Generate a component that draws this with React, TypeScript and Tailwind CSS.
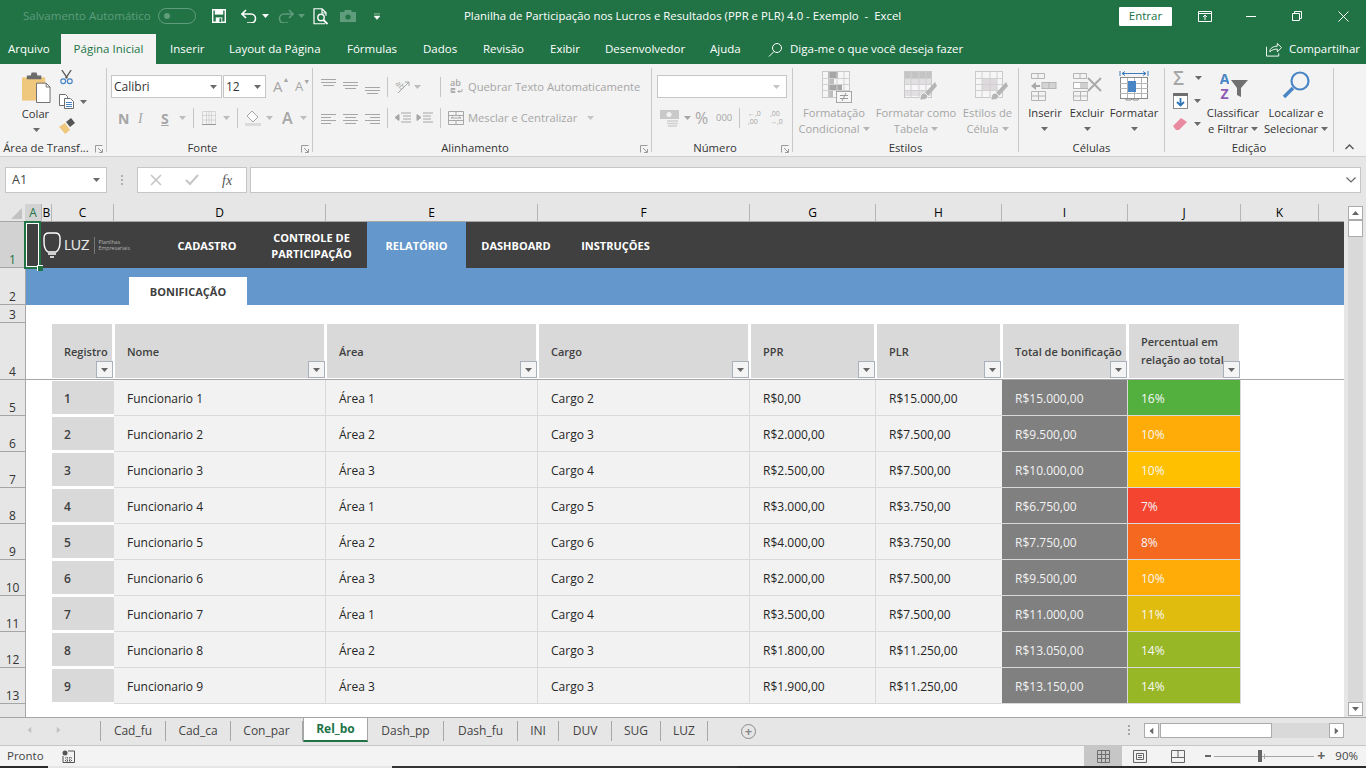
import React from 'react';

const UI = "font-['Open_Sans','Noto_Sans',sans-serif]";

const Caret = ({ className = 'text-[#6a6a6a]' }: { className?: string }) => (
  <svg width="7" height="4" viewBox="0 0 7 4" className={`shrink-0 ${className}`}>
    <path d="M0 0h7L3.5 4z" fill="currentColor" />
  </svg>
);

const Lines = ({ rows, color = '#a6a6a6' }: { rows: number[][]; color?: string }) => (
  <svg width="15" height="15" viewBox="0 0 15 15" className="shrink-0">
    {rows.map((r, i) => (
      <rect key={i} x={r[1]} y={r[0]} width={r[2]} height="1" fill={color} />
    ))}
  </svg>
);

const VSep = ({ className = '' }: { className?: string }) => <div className={`w-px h-[20px] bg-[#c6c6c6] shrink-0 ${className}`} />;

const Launcher = () => (
  <svg width="8" height="8" viewBox="0 0 8 8" className="shrink-0">
    <path d="M0.5 7.5V0.5H7.5M3 3l4 4M7.5 4v3.5H4" fill="none" stroke="#9a9a9a" />
  </svg>
);

const Group = ({ w, label, launcher, children }: { w: string; label: string; launcher?: boolean; children: React.ReactNode }) => (
  <div className={`${w} shrink-0 h-[84px] flex flex-col border-r border-[#c9c9c9]`}>
    <div className="h-[73px] flex">{children}</div>
    <div className={`relative h-[14px] -mb-[3px] flex items-center justify-center text-[11.3px] leading-[14px] text-[#333333] ${launcher ? 'pr-[14px]' : ''}`}>
      <span className="whitespace-nowrap">{label}</span>
      {launcher && <div className="absolute right-[3px] top-[4px]"><Launcher /></div>}
    </div>
  </div>
);

const BigLabel = ({ l1, l2, gray }: { l1: string; l2?: string; gray?: boolean }) => (
  <div className={`flex flex-col items-center text-[11.2px] leading-[16px] whitespace-nowrap ${gray ? 'text-[#a6a6a6]' : 'text-[#333333]'}`}>
    <span>{l1}</span>
    {l2 ? (
      <span className="flex items-center gap-[3px]">{l2}<Caret className={gray ? 'text-[#b5b5b5]' : 'text-[#6a6a6a]'} /></span>
    ) : (
      <span className="h-[16px] flex items-center"><Caret /></span>
    )}
  </div>
);

const TableIcon = ({ kind }: { kind: 'cond' | 'table' | 'cell' }) => (
  <svg width="36" height="32" viewBox="0 0 36 32" className="ml-[5px]">
    <g stroke="#c9c9c9" fill="#f6f6f6">
      <rect x="3.5" y="0.5" width="27" height="26" />
    </g>
    {kind === 'cond' && (
      <g>
        <rect x="9" y="1" width="10" height="6" fill="#a6a6a6" />
        <rect x="9" y="7" width="6" height="6" fill="#bdbdbd" />
        <rect x="9" y="13" width="14" height="6" fill="#a6a6a6" />
        <rect x="9" y="19" width="5" height="7" fill="#bdbdbd" />
      </g>
    )}
    {kind === 'table' && <rect x="4" y="1" width="26" height="6" fill="#c4c4c4" />}
    {kind === 'table' && <rect x="4" y="7" width="26" height="6" fill="#e2dfe2" />}
    {kind === 'table' && <rect x="4" y="19" width="26" height="6" fill="#e2dfe2" />}
    {kind === 'cell' && <rect x="10" y="7" width="15" height="13" fill="#ddd9dd" />}
    <g stroke="#d0d0d0">
      <path d="M3 7.5h28M3 13.5h28M3 19.5h28M10 1v26M18 1v26M25 1v26" />
    </g>
    {kind === 'cond' ? (
      <g>
        <rect x="17.5" y="20.5" width="15" height="11" fill="#f6f6f6" stroke="#a6a6a6" />
        <path d="M21 24.5h8M21 27.5h8M27 22l-4 8" stroke="#9a9a9a" fill="none" />
      </g>
    ) : (
      <g>
        <path d="M34 11L24 22l3 3 9-10z" fill="#b5b5b5" />
        <path d="M24 22c-4 0-5 3-5 7 4 0 8-1 8-4z" fill="#b5b5b5" stroke="#f3f3f3" />
      </g>
    )}
  </svg>
);

const MiniCells = ({ kind }: { kind: 'ins' | 'del' }) => (
  <svg width="30" height="30" viewBox="0 0 30 30" className="shrink-0">
    <g fill="none" stroke="#b5b5b5">
      <path d="M1.5 1.5h13v5h-13zM8 1.5v5" />
      <path d="M1.5 19.5h14v9h-14zM1.5 24h14M8.5 19.5v9" />
    </g>
    {kind === 'ins' ? (
      <g>
        <path d="M1 14l5-4v3h4v2H6v3z" fill="#a9a9a9" />
        <rect x="12" y="10.5" width="14" height="6" fill="#d4d4d4" stroke="#b5b5b5" />
        <path d="M19 10.5v6" stroke="#b5b5b5" />
      </g>
    ) : (
      <g>
        <rect x="1.5" y="10.5" width="14" height="6" fill="#fff" stroke="#b5b5b5" />
        <rect x="8" y="11" width="8" height="5" fill="#cfcfcf" />
        <path d="M16 6l13 13M29 6L16 19" stroke="#a9a9a9" strokeWidth="2" />
      </g>
    )}
  </svg>
);

const Ribbon = () => (
  <div className="h-[93px] shrink-0 bg-[#f3f3f3] border-b border-[#d0d0d0] pt-[4px] flex">
    <Group w="w-[107px]" label="Área de Transf..." launcher>
      <div className="w-[58px] flex flex-col items-center pt-[4px] pl-[14px]">
        <svg width="29" height="32" viewBox="0 0 30 32">
          <path d="M0 5h24v24H0z" fill="#efc77d" />
          <path d="M5 3h4l1-3h5l1 3h4v4H5z" fill="#6b6b6b" />
          <path d="M15 11h10l4 4v16H15z" fill="#fff" stroke="#6e6e6e" />
          <path d="M25 11v4h4" fill="none" stroke="#6e6e6e" />
        </svg>
        <div className="mt-[2px] text-[11.2px] leading-[16px] text-[#333333] -ml-[1px]">Colar</div>
        <div className="h-[16px] flex items-center"><Caret /></div>
      </div>
      <div className="flex flex-col pt-[2px] pl-[1px]">
        <svg width="15" height="15" viewBox="0 0 16 16">
          <path d="M3 0l6 9M13 0L7 9" stroke="#555" strokeWidth="1.4" />
          <circle cx="4.5" cy="12" r="2.6" fill="none" stroke="#4a86c5" strokeWidth="1.3" />
          <circle cx="11.5" cy="12" r="2.6" fill="none" stroke="#4a86c5" strokeWidth="1.3" />
        </svg>
        <div className="mt-[9px] flex items-center gap-[6px]">
          <svg width="15" height="15" viewBox="0 0 15 15">
            <path d="M0.5 0.5h6l2 2v9h-8z" fill="#fff" stroke="#6e6e6e" />
            <path d="M5.5 4.5h6l3 3v7h-9z" fill="#fff" stroke="#6e6e6e" />
            <path d="M7 8.5h6M7 10.5h6M7 12.5h6" stroke="#4a86c5" />
          </svg>
          <Caret />
        </div>
        <svg width="16" height="16" viewBox="0 0 16 16" className="mt-[9px]">
          <path d="M0 9l6-4 5 7-5 4C4 13 2 11 0 9z" fill="#efc77d" />
          <path d="M7 4l5-4 4 5-5 4z" fill="#555" />
        </svg>
      </div>
    </Group>

    <Group w="w-[206px]" label="Fonte" launcher>
      <div className="flex flex-col pt-[7px] pl-[4px]">
        <div className="flex items-center h-[23px]">
          <div className="w-[111px] h-[23px] bg-white border border-[#c6c6c6] flex items-center justify-between pl-[2px] pr-[4px] text-[12px] text-[#333333]">
            Calibri<Caret />
          </div>
          <div className="w-[43px] h-[23px] ml-[1px] bg-white border border-[#c6c6c6] flex items-center justify-between pl-[2px] pr-[4px] text-[12px] text-[#333333]">
            12<Caret />
          </div>
          <span className="ml-[7px] w-[22px] text-[15px] text-[#a6a6a6]">A<span className="text-[7px] align-top">▲</span></span>
          <span className="w-[14px] text-[13px] text-[#a6a6a6]">A<span className="text-[7px] align-top">▼</span></span>
        </div>
        <div className="flex items-center h-[20px] mt-[10px] text-[#a6a6a6]">
          <span className="ml-[7px] w-[20px] text-[14px] font-bold">N</span>
          <span className="w-[23px] text-[14px] italic font-['Liberation_Serif',serif]">I</span>
          <span className="w-[18px] text-[14px] font-bold underline">S</span>
          <Caret className="text-[#bdbdbd]" />
          <VSep className="ml-[7px]" />
          <svg width="14" height="14" viewBox="0 0 14 14" className="ml-[8px]">
            <path d="M0.5 0.5h13v13h-13zM7 0.5v13M0.5 4.5h13M0.5 9h13M4.5 0.5v13M9.5 0.5v13" fill="none" stroke="#bdbdbd" strokeDasharray="1 1" />
            <path d="M0 13.5h14" stroke="#9a9a9a" />
          </svg>
          <Caret className="ml-[7px] text-[#bdbdbd]" />
          <VSep className="ml-[7px]" />
          <svg width="16" height="16" viewBox="0 0 16 16" className="ml-[7px]">
            <path d="M7 1l6 6-5 5-6-6z" fill="#fff" stroke="#a6a6a6" />
            <rect x="0" y="13" width="16" height="3" fill="#dcdcdc" />
          </svg>
          <Caret className="ml-[5px] text-[#bdbdbd]" />
          <span className="ml-[9px] w-[15px] text-[16px] leading-[20px] font-semibold">A</span>
          <Caret className="ml-[3px] text-[#bdbdbd]" />
        </div>
      </div>
    </Group>

    <Group w="w-[339px]" label="Alinhamento" launcher>
      <div className="flex flex-col pt-[7px] pl-[8px]">
        <div className="flex items-center h-[23px]">
          <Lines rows={[[0, 0, 15], [3, 0, 15], [6, 2, 11]]} />
          <div className="w-[7px]" />
          <Lines rows={[[3, 0, 15], [6, 0, 15], [9, 2, 11]]} />
          <div className="w-[7px]" />
          <Lines rows={[[8, 0, 15], [11, 0, 15], [14, 2, 11]]} />
          <VSep className="ml-[7px] mr-[7px]" />
          <svg width="15" height="15" viewBox="0 0 15 15">
            <text x="0" y="9" fontSize="8" fill="#a6a6a6" fontFamily="Open Sans" transform="rotate(45 5 7)">ab</text>
            <path d="M3 14L14 3M14 3v4M14 3h-4" stroke="#a6a6a6" fill="none" />
          </svg>
          <Caret className="ml-[4px] text-[#bdbdbd]" />
          <VSep className="ml-[19px]" />
          <svg width="14" height="15" viewBox="0 0 14 15" className="ml-[9px] mr-[4px] shrink-0">
            <text x="0" y="7" fontSize="9" fontWeight="600" fill="#a6a6a6" fontFamily="Open Sans">ab</text>
            <path d="M1 9.5h4v1H2v2h3v1H1zM12 10v2.5H8M9.5 11L8 12.5 9.5 14" fill="none" stroke="#a6a6a6" strokeWidth="0.9" />
          </svg>
          <span className="pt-[1px] text-[11.2px] text-[#a6a6a6] whitespace-nowrap">Quebrar Texto Automaticamente</span>
        </div>
        <div className="flex items-center h-[20px] mt-[10px]">
          <Lines rows={[[3, 0, 15], [6, 0, 10], [9, 0, 15], [12, 0, 10]]} />
          <div className="w-[7px]" />
          <Lines rows={[[3, 0, 15], [6, 2, 11], [9, 0, 15], [12, 2, 11]]} />
          <div className="w-[7px]" />
          <Lines rows={[[3, 0, 15], [6, 5, 10], [9, 0, 15], [12, 5, 10]]} />
          <VSep className="ml-[7px] mr-[7px]" />
          <svg width="38" height="15" viewBox="0 0 38 15">
            <path d="M6 2h10M8 5h8M8 8h8M6 11h10M0 6.5l4-3v6z" fill="#a6a6a6" stroke="#a6a6a6" />
            <path d="M28 2h10M28 5h8M28 8h8M28 11h10M22 3.5l4 3-4 3z" fill="#a6a6a6" stroke="#a6a6a6" />
          </svg>
          <VSep className="ml-[7px]" />
          <svg width="16" height="14" viewBox="0 0 16 14" className="ml-[7px]">
            <path d="M0.5 0.5h15v13h-15zM0.5 4.5h15M0.5 9.5h15M8 0.5v4M8 9.5v4M3 7h10M3 7l2-1.5M13 7l-2-1.5" fill="none" stroke="#a6a6a6" />
          </svg>
          <span className="ml-[4px] text-[11.2px] text-[#a6a6a6] whitespace-nowrap">Mesclar e Centralizar</span>
          <Caret className="ml-[10px] text-[#c4c4c4]" />
        </div>
      </div>
    </Group>

    <Group w="w-[141px]" label="Número" launcher>
      <div className="flex flex-col pt-[7px] pl-[5px]">
        <div className="w-[130px] h-[23px] bg-white border border-[#c6c6c6] flex items-center justify-end pr-[6px]">
          <Caret className="text-[#c4c4c4]" />
        </div>
        <div className="flex items-center h-[20px] mt-[10px] text-[#a6a6a6]">
          <svg width="20" height="17" viewBox="0 0 20 17" className="ml-[3px]">
            <rect x="0" y="0" width="19" height="9" fill="#c9c9c9" />
            <circle cx="9" cy="4.5" r="2.5" fill="#f3f3f3" />
            <path d="M7 11h11M7 13.5h11M8 16h9" stroke="#cfcfcf" strokeWidth="1.4" />
          </svg>
          <Caret className="ml-[4px]" />
          <span className="ml-[4px] w-[21px] text-[16px] leading-[20px]">%</span>
          <span className="w-[23px] text-[9.5px]">000</span>
          <VSep />
          <span className="ml-[8px] w-[22px] text-[7px] leading-[8px] whitespace-nowrap">←,0<br />,00</span>
          <span className="text-[7px] leading-[8px] whitespace-nowrap">,00<br />→,0</span>
        </div>
      </div>
    </Group>

    <Group w="w-[226px]" label="Estilos">
      <div className="w-[82px] flex flex-col items-center pt-[3px]">
        <TableIcon kind="cond" />
        <div className="mt-[2px]"><BigLabel l1="Formatação" l2="Condicional" gray /></div>
      </div>
      <div className="w-[82px] flex flex-col items-center pt-[3px]">
        <TableIcon kind="table" />
        <div className="mt-[2px]"><BigLabel l1="Formatar como" l2="Tabela" gray /></div>
      </div>
      <div className="w-[61px] flex flex-col items-center pt-[3px]">
        <TableIcon kind="cell" />
        <div className="mt-[2px]"><BigLabel l1="Estilos de" l2="Célula" gray /></div>
      </div>
    </Group>

    <Group w="w-[146px]" label="Células">
      <div className="w-[50px] ml-[1px] flex flex-col items-center pt-[4px]">
        <MiniCells kind="ins" />
        <div className="mt-[3px]"><BigLabel l1="Inserir" /></div>
      </div>
      <div className="w-[34px] flex flex-col items-center pt-[4px]">
        <MiniCells kind="del" />
        <div className="mt-[3px]"><BigLabel l1="Excluir" /></div>
      </div>
      <div className="w-[60px] flex flex-col items-center pt-[2px]">
        <svg width="30" height="32" viewBox="0 0 30 32">
          <path d="M1 1v5M29 1v5M3 3.5h24M3 3.5l3-2M3 3.5l3 2M27 3.5l-3-2M27 3.5l-3 2" fill="none" stroke="#3d7ab8" />
          <rect x="1.5" y="7.5" width="27" height="21" fill="#fff" stroke="#8a8a8a" />
          <path d="M1 13.5h28M1 18.5h28M1 23.5h28M8.5 8v20M15.5 8v20M22.5 8v20" stroke="#b5b5b5" />
          <rect x="9" y="11" width="8" height="11" fill="#4a86c5" />
          <path d="M7 28v2h5l2-2M14 28v2h5l2-2" fill="none" stroke="#8a8a8a" />
        </svg>
        <div className="mt-[3px]"><BigLabel l1="Formatar" /></div>
      </div>
    </Group>

    <Group w="w-[169px]" label="Edição">
      <div className="w-[39px] pl-[8px] flex flex-col pt-[2px]">
        <div className="flex items-center gap-[6px] h-[16px]">
          <span className="w-[16px] text-[19px] leading-[16px] text-[#a6a6a6] font-semibold">Σ</span>
          <Caret />
        </div>
        <div className="flex items-center gap-[6px] h-[16px] mt-[7px]">
          <svg width="15" height="16" viewBox="0 0 15 16">
            <rect x="0.5" y="0.5" width="14" height="15" fill="#fff" stroke="#8a8a8a" />
            <rect x="0" y="0" width="15" height="3" fill="#6e6e6e" />
            <path d="M7.5 5v7M4 9l3.5 3.5L11 9" stroke="#2f75b5" strokeWidth="1.8" fill="none" />
          </svg>
          <Caret />
        </div>
        <div className="flex items-center gap-[6px] h-[16px] mt-[7px]">
          <svg width="15" height="14" viewBox="0 0 15 14">
            <path d="M0 9l8-8 6 4-8 8H3z" fill="#e98aa0" />
          </svg>
          <Caret />
        </div>
      </div>
      <div className="w-[58px] flex flex-col items-center pt-[3px]">
        <div className="h-[31px] w-[30px] flex">
          <div className="w-[13px] flex flex-col items-center text-[14px] leading-[14px] font-bold">
            <span className="h-[14px] mt-[1px] overflow-hidden text-[#4a86c5]">A</span>
            <span className="h-[14px] mt-[1px] overflow-hidden text-[#8e5ab5]">Z</span>
          </div>
          <svg width="17" height="31" viewBox="0 0 17 31" className="shrink-0">
            <path d="M0 9h17l-7 8v9l-4-2v-7z" fill="#707070" />
          </svg>
        </div>
        <div className="mt-[3px]"><BigLabel l1="Classificar" l2="e Filtrar" /></div>
      </div>
      <div className="w-[66px] ml-[1px] flex flex-col items-center pt-[3px]">
        <svg width="28" height="31" viewBox="0 0 28 31">
          <circle cx="18" cy="10" r="8.5" fill="none" stroke="#4a86c5" strokeWidth="2.2" />
          <path d="M11 17L2 26" stroke="#4a86c5" strokeWidth="3.6" />
        </svg>
        <div className="mt-[3px]"><BigLabel l1="Localizar e" l2="Selecionar" /></div>
      </div>
    </Group>

    <div className="flex-1 flex justify-end items-end pr-[12px] pb-[6px]">
      <svg width="9" height="6" viewBox="0 0 9 6"><path d="M0.5 5l4-4 4 4" fill="none" stroke="#555" strokeWidth="1.4" /></svg>
    </div>
  </div>
);

const tabs = [
  { label: 'Inserir', cls: 'w-[59px]' },
  { label: 'Layout da Página', cls: 'w-[118px]' },
  { label: 'Fórmulas', cls: 'w-[76px]' },
  { label: 'Dados', cls: 'w-[60px]' },
  { label: 'Revisão', cls: 'w-[67px]' },
  { label: 'Exibir', cls: 'w-[55px]' },
  { label: 'Desenvolvedor', cls: 'w-[105px]' },
  { label: 'Ajuda', cls: 'w-[58px]' },
];

const TitleBar = () => (
  <div className="h-[32px] shrink-0 bg-[#217346] flex items-center text-white relative">
    <span className="ml-[23px] text-[11.5px] text-[#5f9c7c] w-[135px] whitespace-nowrap">Salvamento Automático</span>
    <div className="w-[38px] h-[16px] rounded-full border border-[#5f9c7c] flex items-center pl-[5px]">
      <div className="w-[6px] h-[6px] rounded-full bg-[#5f9c7c]" />
    </div>
    <svg width="14" height="14" viewBox="0 0 15 15" className="ml-[16px]">
      <path d="M0.75 0.75h13.5v13.5H0.75z" fill="none" stroke="#fff" strokeWidth="1.5" />
      <rect x="3" y="1" width="9" height="5" fill="#fff" />
      <rect x="4" y="9" width="7" height="5" fill="#fff" />
      <rect x="8" y="10" width="2" height="4" fill="#217346" />
    </svg>
    <svg width="16" height="14" viewBox="0 0 16 14" className="ml-[15px]">
      <path d="M1 5h9a4.5 4.5 0 010 9H6M5 1L1 5l4 4" fill="none" stroke="#fff" strokeWidth="1.6" />
    </svg>
    <Caret className="ml-[5px] text-white" />
    <svg width="16" height="14" viewBox="0 0 16 14" className="ml-[9px]">
      <path d="M15 5H6a4.5 4.5 0 000 9h4M11 1l4 4-4 4" fill="none" stroke="#5f9c7c" strokeWidth="1.6" />
    </svg>
    <Caret className="ml-[4px] text-[#5f9c7c]" />
    <svg width="16" height="17" viewBox="0 0 16 17" className="ml-[8px]">
      <path d="M9 0.75H1v15h11M9 0.75l4 4v3M9 1v4h4" fill="none" stroke="#fff" strokeWidth="1.2" />
      <circle cx="8" cy="9.5" r="3.2" fill="#217346" stroke="#fff" strokeWidth="1.4" />
      <path d="M10.5 12l4 4" stroke="#fff" strokeWidth="1.8" />
    </svg>
    <svg width="16" height="12" viewBox="0 0 16 12" className="ml-[11px]">
      <path d="M0 2h4l1-2h6l1 2h4v10H0z" fill="#5f9c7c" />
      <circle cx="8" cy="7" r="2.6" fill="#217346" />
    </svg>
    <svg width="6" height="7" viewBox="0 0 7 7" className="ml-[18px]">
      <path d="M0 0.5h7M0 3h7L3.5 7z" fill="#fff" stroke="#fff" strokeWidth="0.6" />
    </svg>
    <span className="absolute left-[464px] text-[11.4px] whitespace-pre">Planilha de Participação nos Lucros e Resultados (PPR e PLR) 4.0 - Exemplo  -  Excel</span>
    <div className="ml-auto flex items-center">
      <div className="w-[53px] h-[19px] bg-white text-[#217346] text-[11.5px] flex items-center justify-center rounded-[1px]">Entrar</div>
      <svg width="14" height="11" viewBox="0 0 14 11" className="ml-[26px]">
        <path d="M0.5 0.5h13v10H0.5zM0.5 2.5h13M7 9V4.5M5 6l2-2 2 2" fill="none" stroke="#fff" />
      </svg>
      <div className="w-[10px] h-px bg-white ml-[34px]" />
      <svg width="10" height="10" viewBox="0 0 10 10" className="ml-[36px]">
        <path d="M0.5 2.5h7v7h-7zM2.5 2.5v-2h7v7h-2" fill="none" stroke="#fff" />
      </svg>
      <svg width="11" height="11" viewBox="0 0 11 11" className="ml-[36px] mr-[17px]">
        <path d="M0.5 0.5l10 10M10.5 0.5l-10 10" stroke="#fff" />
      </svg>
    </div>
  </div>
);

const TabBar = () => (
  <div className="h-[32px] shrink-0 bg-[#217346] flex items-end text-white text-[11.5px]">
    <div className="w-[61px] h-[30px] pl-[8px] flex items-center">Arquivo</div>
    <div className="w-[95px] h-[30px] bg-[#f3f3f3] text-[#217346] flex items-center justify-center">Página Inicial</div>
    <div className="w-[14px]" />
    {tabs.map(t => (
      <div key={t.label} className={`${t.cls} h-[30px] flex items-center whitespace-nowrap`}>{t.label}</div>
    ))}
    <div className="h-[30px] flex items-center">
      <svg width="15" height="15" viewBox="0 0 15 15">
        <circle cx="9" cy="6" r="4.5" fill="none" stroke="#fff" />
        <path d="M6 9.5L1 14.5M8 10.5h2" stroke="#fff" />
      </svg>
      <span className="ml-[7px]">Diga-me o que você deseja fazer</span>
    </div>
    <div className="ml-auto h-[30px] flex items-center pr-[6px]">
      <svg width="16" height="15" viewBox="0 0 17 15">
        <path d="M0.5 4.5v10h13v-3M4 10c0-4 4-6 8-6V1l4.5 4.5L12 10V7c-3 0-6 1-8 3z" fill="none" stroke="#fff" />
      </svg>
      <span className="ml-[7px]">Compartilhar</span>
    </div>
  </div>
);

const FormulaBar = () => (
  <div className="h-[47px] shrink-0 bg-[#e6e6e6] flex items-start pt-[10px]">
    <div className="ml-[5px] w-[102px] h-[26px] bg-white border border-[#c6c6c6] flex items-center justify-between px-[6px] text-[12.5px] text-[#444444]">
      A1<Caret />
    </div>
    <div className="w-[30px] h-[26px] flex flex-col items-center justify-center gap-[2px]">
      <div className="w-[2px] h-[2px] bg-[#b0b0b0]" />
      <div className="w-[2px] h-[2px] bg-[#b0b0b0]" />
      <div className="w-[2px] h-[2px] bg-[#b0b0b0]" />
    </div>
    <div className="w-[110px] h-[26px] bg-white border border-[#c6c6c6] flex items-center">
      <svg width="12" height="12" viewBox="0 0 12 12" className="ml-[12px]">
        <path d="M1 1l10 10M11 1L1 11" stroke="#c6c6c6" strokeWidth="1.6" />
      </svg>
      <svg width="14" height="12" viewBox="0 0 14 12" className="ml-[23px]">
        <path d="M1 6l4 4 8-9" fill="none" stroke="#c6c6c6" strokeWidth="2" />
      </svg>
      <span className="ml-[23px] font-['Liberation_Serif',serif] italic text-[14px] text-[#555555]">fx</span>
    </div>
    <div className="ml-[3px] w-[1111px] h-[26px] bg-white border border-[#c6c6c6] flex items-center justify-end pr-[4px]">
      <svg width="10" height="6" viewBox="0 0 10 6"><path d="M0.5 0.5L5 5l4.5-4.5" fill="none" stroke="#666" strokeWidth="1.2" /></svg>
    </div>
  </div>
);

const columns = [
  { name: 'A', cls: 'w-[17px] bg-[#d2d2d2] text-[#217346]' },
  { name: 'B', cls: 'w-[10px]' },
  { name: 'C', cls: 'w-[62px]' },
  { name: 'D', cls: 'w-[212px]' },
  { name: 'E', cls: 'w-[212px]' },
  { name: 'F', cls: 'w-[212px]' },
  { name: 'G', cls: 'w-[126px]' },
  { name: 'H', cls: 'w-[126px]' },
  { name: 'I', cls: 'w-[126px]' },
  { name: 'J', cls: 'w-[113px]' },
  { name: 'K', cls: 'w-[78px]' },
];

const ColumnHeader = () => (
  <div className="h-[18px] shrink-0 flex bg-[#e6e6e6] border-b border-[#a6a6a6]">
    <div className="w-[25px] shrink-0 flex items-end justify-end pr-[3px] pb-[2px]">
      <svg width="11" height="11" viewBox="0 0 11 11"><path d="M11 0v11H0z" fill="#c2c2c2" /></svg>
    </div>
    {columns.map(c => (
      <div key={c.name} className={`${c.cls} shrink-0 flex items-center justify-center border-r border-[#b5b5b5] text-[12px] leading-none`}>
        {c.name}
      </div>
    ))}
    <div className="flex-1" />
  </div>
);

const RowHead = ({ n, selected }: { n: number | string; selected?: boolean }) => (
  <div className={`w-[26px] shrink-0 border-r border-b border-[#a6a6a6] flex items-end justify-center text-[12px] leading-[15px] ${selected ? 'bg-[#d2d2d2] text-[#217346]' : 'bg-[#e6e6e6] text-[#333333]'}`}>
    {n}
  </div>
);

const Filter = () => (
  <div className="absolute right-[1px] bottom-0 w-[17px] h-[17px] bg-[#f4f4f4] border border-[#a9b0bb] flex items-center justify-center">
    <Caret className="text-[#666666]" />
  </div>
);

const headers = [
  { label: 'Registro', cls: 'mr-[2px] pl-[12px] pt-[2px]' },
  { label: 'Nome', cls: 'ml-[1px] mr-[2px] pl-[12px] pt-[2px]' },
  { label: 'Área', cls: 'ml-[1px] mr-[2px] pl-[12px] pt-[2px]' },
  { label: 'Cargo', cls: 'ml-[1px] mr-[2px] pl-[12px] pt-[2px]' },
  { label: 'PPR', cls: 'ml-[1px] mr-[2px] pl-[12px] pt-[2px]' },
  { label: 'PLR', cls: 'ml-[1px] mr-[2px] pl-[12px] pt-[2px]' },
  { label: 'Total de bonificação', cls: 'ml-[1px] mr-[2px] pl-[12px] pt-[2px] whitespace-nowrap' },
  { label: 'Percentual em relação ao total', cls: 'ml-[1px] mr-[2px] pl-[12px] pr-[6px]' },
];

const rows = [
  ['1', 'Funcionario 1', 'Área 1', 'Cargo 2', 'R$0,00', 'R$15.000,00', 'R$15.000,00', '16%', 'bg-[#54b03e]'],
  ['2', 'Funcionario 2', 'Área 2', 'Cargo 3', 'R$2.000,00', 'R$7.500,00', 'R$9.500,00', '10%', 'bg-[#ffac08]'],
  ['3', 'Funcionario 3', 'Área 3', 'Cargo 4', 'R$2.500,00', 'R$7.500,00', 'R$10.000,00', '10%', 'bg-[#ffc000]'],
  ['4', 'Funcionario 4', 'Área 1', 'Cargo 5', 'R$3.000,00', 'R$3.750,00', 'R$6.750,00', '7%', 'bg-[#f44530]'],
  ['5', 'Funcionario 5', 'Área 2', 'Cargo 6', 'R$4.000,00', 'R$3.750,00', 'R$7.750,00', '8%', 'bg-[#f4681f]'],
  ['6', 'Funcionario 6', 'Área 3', 'Cargo 2', 'R$2.000,00', 'R$7.500,00', 'R$9.500,00', '10%', 'bg-[#ffac08]'],
  ['7', 'Funcionario 7', 'Área 1', 'Cargo 4', 'R$3.500,00', 'R$7.500,00', 'R$11.000,00', '11%', 'bg-[#dfbc0d]'],
  ['8', 'Funcionario 8', 'Área 2', 'Cargo 3', 'R$1.800,00', 'R$11.250,00', 'R$13.050,00', '14%', 'bg-[#98b726]'],
  ['9', 'Funcionario 9', 'Área 3', 'Cargo 3', 'R$1.900,00', 'R$11.250,00', 'R$13.150,00', '14%', 'bg-[#98b726]'],
];

const GRID = 'grid grid-cols-[26px_62px_212px_212px_212px_126px_126px_126px_113px_1fr] flex-1';

const Sheet = () => (
  <div className="relative flex flex-col h-[495px] font-['Open_Sans','Noto_Sans',sans-serif]">
    <div className="flex h-[46px]">
      <RowHead n={1} selected />
      <div className="flex-1 bg-[#404040] flex items-stretch text-white font-bold text-[11px] leading-[16px]">
        <div className="w-[132px] pl-[17px] flex items-center">
          <svg width="18" height="27" viewBox="0 0 18 27">
            <path d="M5 20C2 18 1 15 1 10V6c0-3 2-5 5-5h6c3 0 5 2 5 5v4c0 5-1 8-4 10z" fill="none" stroke="#fff" strokeWidth="1.4" />
            <path d="M5 22h8M7 25h4" stroke="#fff" strokeWidth="1.4" />
          </svg>
          <span className="ml-[3px] text-[14px] font-normal font-['Lato',sans-serif] text-[#e6e6e6]">LUZ</span>
          <div className="w-px h-[17px] bg-[#777777] ml-[4px]" />
          <div className="ml-[4px] text-[5.2px] leading-[6.5px] font-normal text-[#b5b5b5]">Planilhas<br />Empresariais</div>
        </div>
        <div className="w-[98px] pt-[2px] flex items-center justify-center">CADASTRO</div>
        <div className="w-[111px] pt-[2px] flex items-center justify-center text-center">CONTROLE DE<br />PARTICIPAÇÃO</div>
        <div className="w-[99px] pt-[2px] bg-[#6497cb] flex items-center justify-center">RELATÓRIO</div>
        <div className="w-[100px] pt-[2px] flex items-center justify-center">DASHBOARD</div>
        <div className="w-[99px] pt-[2px] flex items-center justify-center">INSTRUÇÕES</div>
      </div>
    </div>

    <div className="flex h-[37px]">
      <RowHead n={2} />
      <div className="flex-1 bg-[#6497cb] flex items-end pl-[103px]">
        <div className="w-[118px] h-[28px] pt-[2px] bg-white flex items-center justify-center text-[11px] font-bold text-[#404040]">BONIFICAÇÃO</div>
      </div>
    </div>

    <div className="flex h-[18px]">
      <RowHead n={3} />
      <div className="flex-1 bg-white" />
    </div>

    <div className="flex h-[57px]">
      <RowHead n={4} />
      <div className={`${GRID} bg-white border-b border-[#a6a6a6]`}>
        <div />
        {headers.map(h => (
          <div key={h.label} className="relative h-[55px] pt-px">
            <div className={`h-[54px] bg-[#d9d9d9] flex items-center text-[11px] leading-[18px] font-semibold text-[#404040] overflow-hidden ${h.cls}`}>
              <span>{h.label}</span>
            </div>
            <Filter />
          </div>
        ))}
        <div />
      </div>
    </div>

    {rows.map((r, i) => (
      <div key={r[0]} className="flex h-[36px]">
        <RowHead n={i + 5} />
        <div className={`${GRID} bg-white text-[12px] text-[#262626]`}>
          <div />
          <div className="h-[36px] pt-[1px] pb-[2px]">
            <div className="h-full bg-[#d9d9d9] flex items-center pl-[12px] pt-[2px] font-semibold text-[#404040]">{r[0]}</div>
          </div>
          {[r[1], r[2], r[3], r[4]].map((v, j) => (
            <div key={j} className="bg-[#f2f2f2] border-r border-b border-[#d9d9d9] flex items-center pl-[13px] pt-[2px]">{v}</div>
          ))}
          <div className="bg-[#f2f2f2] border-b border-[#d9d9d9] flex items-center pl-[13px] pt-[2px]">{r[5]}</div>
          <div className="bg-[#808080] border-r border-b border-[#d9d9d9] flex items-center pl-[13px] pt-[2px] text-[#f2f2f2]">{r[6]}</div>
          <div className={`${r[8]} border-r border-b border-[#d9d9d9] flex items-center pl-[13px] pt-[2px] text-[#f7f7f7]`}>{r[7]}</div>
          <div />
        </div>
      </div>
    ))}

    <div className="flex h-[13px]">
      <div className="w-[26px] shrink-0 bg-[#e6e6e6] border-r border-[#a6a6a6]" />
      <div className="flex-1 bg-white" />
    </div>

    <div className="absolute left-[24px] -top-px w-[17px] h-[48px] border-2 border-[#217346]">
      <div className="w-full h-full border border-white" />
    </div>
    <div className="absolute left-[37px] top-[43px] w-[6px] h-[6px] bg-[#217346] border-l border-t border-white" />
  </div>
);

const VScroll = () => (
  <div className="w-[22px] shrink-0 bg-[#e6e6e6] flex flex-col items-center pt-[2px] pb-px">
    <div className="w-[15px] h-[14px] bg-white border border-[#ababab] flex items-center justify-center">
      <Caret className="rotate-180 text-[#666666]" />
    </div>
    <div className="w-[15px] flex-1 bg-[#d9d9d9] flex flex-col">
      <div className="h-[17px] bg-white border border-[#ababab]" />
    </div>
    <div className="w-[15px] h-[14px] bg-white border border-[#ababab] flex items-center justify-center">
      <Caret className="text-[#666666]" />
    </div>
  </div>
);

const sheets = [
  { name: 'Cad_fu', cls: 'w-[65px]' },
  { name: 'Cad_ca', cls: 'w-[65px]' },
  { name: 'Con_par', cls: 'w-[72px]' },
  { name: 'Rel_bo', cls: 'w-[65px]', active: true },
  { name: 'Dash_pp', cls: 'w-[76px]' },
  { name: 'Dash_fu', cls: 'w-[74px]' },
  { name: 'INI', cls: 'w-[41px]' },
  { name: 'DUV', cls: 'w-[53px]' },
  { name: 'SUG', cls: 'w-[49px]' },
  { name: 'LUZ', cls: 'w-[47px]' },
];

const SheetTabs = () => (
  <div className="h-[28px] shrink-0 bg-[#e6e6e6] border-t border-[#a6a6a6] flex items-start text-[12px] text-[#444444]">
    <div className="w-[100px] h-[24px] flex items-center pl-[26px]">
      <Caret className="rotate-90 text-[#c2c2c2]" />
      <div className="w-[22px]" />
      <Caret className="-rotate-90 text-[#c2c2c2]" />
    </div>
    <div className="flex items-start h-[20px] border-l border-[#a6a6a6] mt-[3px]">
      {sheets.map(s =>
        s.active ? (
          <div key={s.name} className={`${s.cls} h-[24px] -mt-[3px] bg-white border-b-2 border-[#217346] border-x border-x-[#a6a6a6] flex items-center justify-center font-bold text-[#217346]`}>{s.name}</div>
        ) : (
          <div key={s.name} className={`${s.cls} h-[20px] border-r border-[#a6a6a6] flex items-center justify-center`}>{s.name}</div>
        ),
      )}
    </div>
    <div className="ml-[33px] mt-[6px] w-[15px] h-[15px] rounded-full border border-[#8a8a8a] flex items-center justify-center text-[#8a8a8a] text-[13px] leading-none font-bold">+</div>
    <div className="ml-auto flex items-start mt-[5px] mr-[22px]">
      <div className="flex flex-col gap-[2px] mr-[14px] mt-[2px]">
        <div className="w-[2px] h-[2px] bg-[#a6a6a6]" />
        <div className="w-[2px] h-[2px] bg-[#a6a6a6]" />
        <div className="w-[2px] h-[2px] bg-[#a6a6a6]" />
      </div>
      <div className="w-[15px] h-[15px] bg-white border border-[#ababab] flex items-center justify-center">
        <Caret className="rotate-90 text-[#666666]" />
      </div>
      <div className="w-[170px] h-[15px] bg-[#d9d9d9] flex pl-px">
        <div className="w-[112px] h-full bg-white border border-[#ababab]" />
      </div>
      <div className="w-[15px] h-[15px] bg-white border border-[#ababab] flex items-center justify-center">
        <Caret className="-rotate-90 text-[#666666]" />
      </div>
    </div>
  </div>
);

const StatusBar = () => (
  <div className="h-[21px] shrink-0 bg-[#f3f3f3] border-t border-[#c6c6c6] flex items-center text-[11.5px] text-[#444444]">
    <span className="ml-[7px] w-[55px]">Pronto</span>
    <svg width="13" height="13" viewBox="0 0 13 13">
      <circle cx="3" cy="3" r="2.5" fill="#555" />
      <path d="M6 1h6.5v11.5H1V6" fill="none" stroke="#555" />
      <path d="M3 8h8M3 10.5h8M5 7v5M8 7v5" stroke="#555" strokeDasharray="1 1" />
    </svg>
    <div className="ml-auto flex items-center h-full">
      <div className="w-[38px] h-[20px] bg-[#c6c6c6] flex items-center justify-center">
        <svg width="13" height="13" viewBox="0 0 13 13">
          <path d="M0.5 0.5h12v12H0.5zM4.5 0.5v12M8.5 0.5v12M0.5 4.5h12M0.5 8.5h12" fill="none" stroke="#6e6e6e" />
        </svg>
      </div>
      <svg width="14" height="13" viewBox="0 0 14 13" className="ml-[11px]">
        <path d="M0.5 0.5h13v12H0.5z" fill="none" stroke="#666" />
        <path d="M3.5 3.5h7v6h-7zM5 5.5h4M5 7.5h4" fill="none" stroke="#666" />
      </svg>
      <svg width="14" height="13" viewBox="0 0 14 13" className="ml-[24px]">
        <path d="M0.5 0.5h13v12H0.5zM0.5 7.5H7V0.5M7 7.5h6.5" fill="none" stroke="#666" />
      </svg>
      <div className="w-[6px] h-[2px] bg-[#666666] ml-[20px]" />
      <div className="relative w-[100px] h-px bg-[#a6a6a6] ml-[3px]">
        <div className="absolute left-[44px] -top-[6px] w-[4px] h-[12px] bg-[#666666]" />
        <div className="absolute left-[50px] -top-[2px] w-px h-[5px] bg-[#a6a6a6]" />
      </div>
      <span className="ml-[3px] text-[14px] leading-none font-bold text-[#666666]">+</span>
      <span className="ml-[10px] mr-[8px] text-[11.5px]">90%</span>
    </div>
  </div>
);

export default function App() {
  return (
    <div className={`w-[1366px] h-[768px] overflow-hidden flex flex-col bg-[#e6e6e6] ${UI}`}>
      <TitleBar />
      <TabBar />
      <Ribbon />
      <FormulaBar />
      <div className="flex">
        <div className="w-[1344px] shrink-0 flex flex-col">
          <ColumnHeader />
          <Sheet />
        </div>
        <VScroll />
      </div>
      <SheetTabs />
      <StatusBar />
      <div className="h-[2px] shrink-0 flex">
        <div className="w-[48px] bg-[#2b2b2b]" />
        <div className="w-[344px] bg-[#e6e6e6]" />
        <div className="w-[345px] bg-[#333333]" />
        <div className="flex-1 bg-[#2b2b2b]" />
      </div>
    </div>
  );
}
